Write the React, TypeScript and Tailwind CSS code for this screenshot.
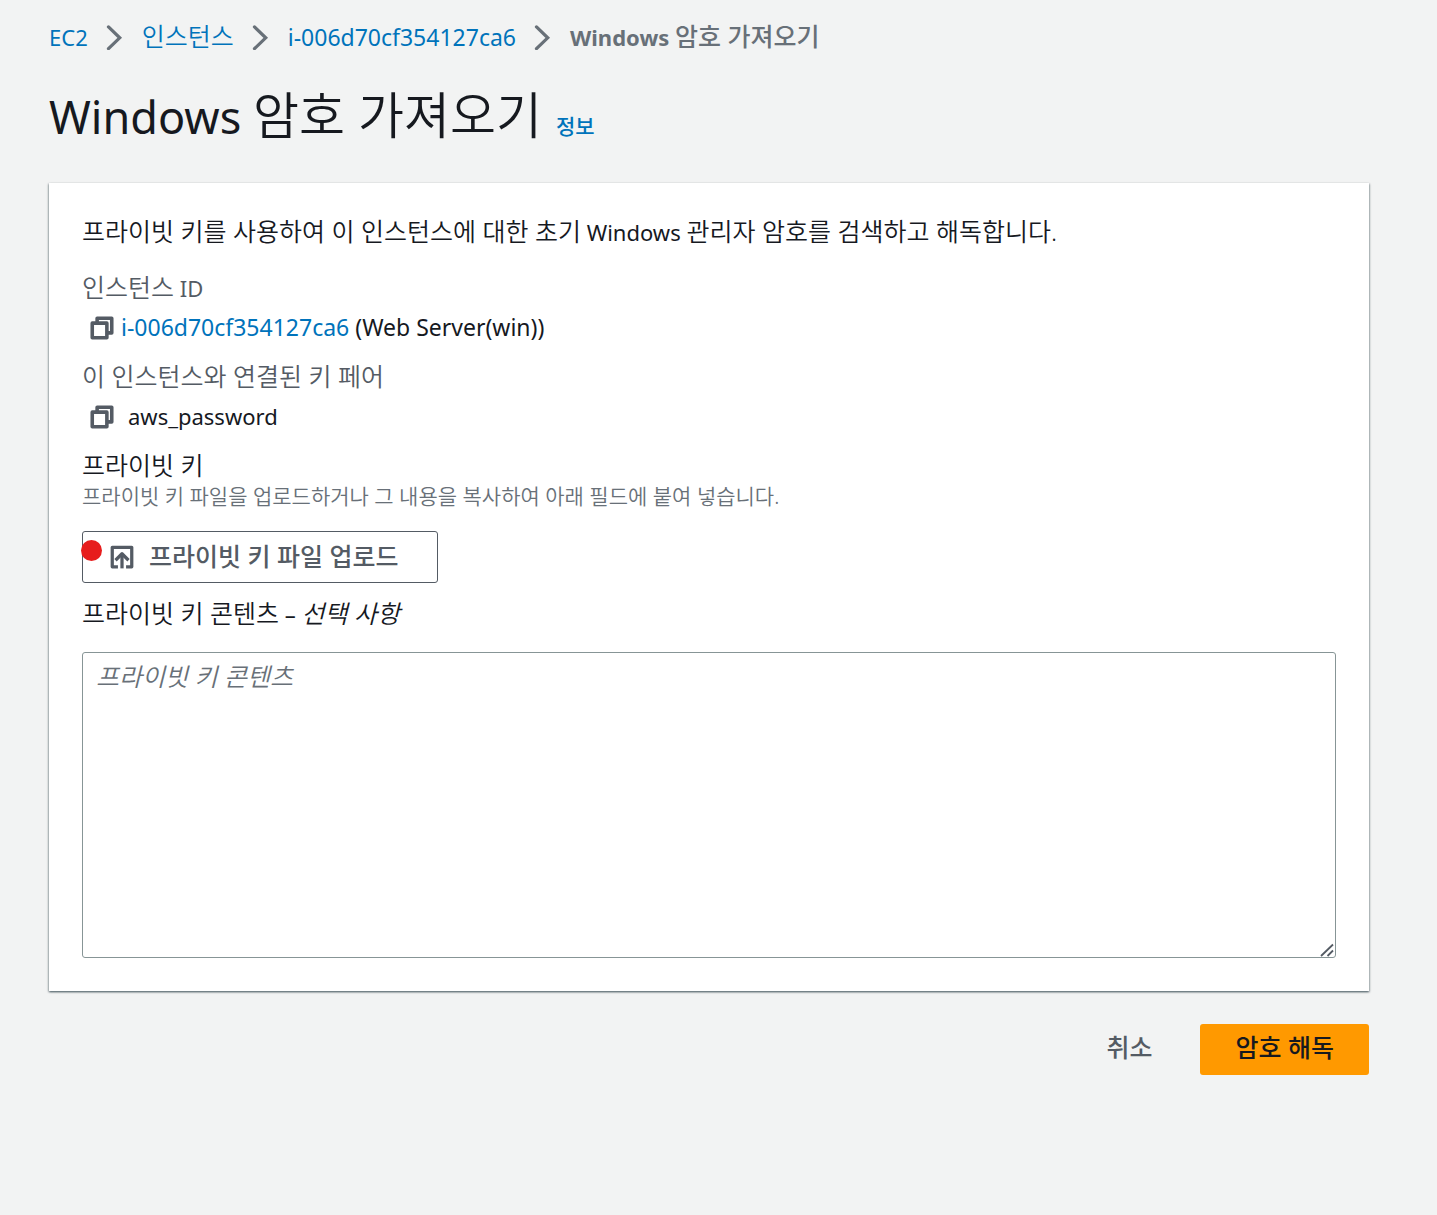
import type { ReactNode } from "react";

function Ko({ children }: { children: ReactNode }) {
  return <span className="text-[25px] font-[350]">{children}</span>;
}

function KoBold({ children }: { children: ReactNode }) {
  return <span className="text-[25px] font-medium">{children}</span>;
}

function Chevron() {
  return (
    <svg aria-hidden="true" viewBox="0 0 16 16" className="mx-[14px] size-[26px] shrink-0 text-[#687078]" fill="none" stroke="currentColor" strokeWidth="2" strokeLinecap="round">
      <path d="M4 1.8 10.9 8.500 4 15.2" />
    </svg>
  );
}

function CopyButton({ label }: { label: string }) {
  return (
    <button type="button" aria-label={label} className="ml-[7px] text-[#545b64]">
      <svg aria-hidden="true" viewBox="0 0 16 16" className="size-[26px]" fill="none" stroke="currentColor" strokeWidth="2.2">
        <path d="M2 5h9v9H2z" strokeLinejoin="round" />
        <path d="M5 5V2h9v9h-3" strokeLinejoin="round" />
      </svg>
    </button>
  );
}

function UploadIcon() {
  return (
    <svg aria-hidden="true" viewBox="0 0 16 16" className="size-[26px] shrink-0" fill="none" stroke="currentColor" strokeWidth="2" strokeLinejoin="round">
      <path d="M5.500 14H2V2h12v12h-3.500" />
      <path d="M8 15V6.500" />
      <path d="M4 10l4-4 4 4" />
    </svg>
  );
}

export default function App() {
  return (
    <div className="min-h-screen bg-[#f2f3f3] pt-5 pr-[68px] pb-10 pl-[49px] font-['Noto_Sans','Noto_Sans_CJK_KR',sans-serif] text-[22px] leading-[33px] text-[#16191f]">
      <nav aria-label="breadcrumb">
        <ol className="flex items-center whitespace-nowrap text-[#0073bb]">
          <li><a href="#ec2">EC2</a></li>
          <li className="flex items-center"><Chevron /><a href="#instances"><Ko>인스턴스</Ko></a></li>
          <li className="flex items-center"><Chevron /><a href="#instance" className="text-[23px]">i-006d70cf354127ca6</a></li>
          <li className="flex items-center font-bold text-[#687078]"><Chevron /><span aria-current="page">Windows <KoBold>암호 가져오기</KoBold></span></li>
        </ol>
      </nav>

      <header className="mt-7 flex items-baseline gap-[14px]">
        <h1 className="text-[45px] leading-[66px]">Windows <span className="text-[50px] font-[350]">암호 가져오기</span></h1>
        <a href="#info" className="text-[21px] font-medium text-[#0073bb]">정보</a>
      </header>

      <main className="mt-[33px]">
        <section className="bg-white px-[33px] pt-8 pb-[33px] shadow-[0_1px_2px_0_rgba(0,28,36,0.6),1px_1px_2px_0_rgba(0,28,36,0.15),-1px_1px_2px_0_rgba(0,28,36,0.15)]">
          <p><Ko>프라이빗 키를 사용하여 이 인스턴스에 대한 초기</Ko> Windows <Ko>관리자 암호를 검색하고 해독합니다.</Ko></p>
          <dl className="mt-[22px]">
            <dt className="text-[#545b64]"><Ko>인스턴스</Ko> ID</dt>
            <dd className="mt-[6px] flex items-center">
              <CopyButton label="인스턴스 ID 복사" />
              <span className="ml-[6px] text-[23px]"><a href="#instance" className="text-[#0073bb]">i-006d70cf354127ca6</a> (Web Server(win))</span>
            </dd>
            <dt className="mt-4 text-[#545b64]"><Ko>이 인스턴스와 연결된 키 페어</Ko></dt>
            <dd className="mt-[6px] flex items-center">
              <CopyButton label="키 페어 복사" />
              <span className="ml-[13px]">aws_password</span>
            </dd>
          </dl>
          <h2 className="mt-4"><Ko>프라이빗 키</Ko></h2>
          <p className="text-[21px] leading-[26px] font-[350] text-[#687078]">프라이빗 키 파일을 업로드하거나 그 내용을 복사하여 아래 필드에 붙여 넣습니다.</p>
          <div className="relative mt-[22px] w-fit">
            <button type="button" className="flex items-center gap-[14px] rounded-[3px] border border-[#545b64] pt-2 pr-[38px] pb-[9px] pl-[26px] text-[#545b64]">
              <UploadIcon />
              <KoBold>프라이빗 키 파일 업로드</KoBold>
            </button>
            <span aria-hidden="true" className="absolute top-[9px] left-[-1px] size-[21px] rounded-full bg-[#e71d1d]" />
          </div>
          <label htmlFor="key-content" className="mt-[14px] block"><Ko>프라이빗 키 콘텐츠</Ko> – <em><Ko>선택 사항</Ko></em></label>
          <div className="relative mt-[21px]">
            <textarea id="key-content" placeholder="프라이빗 키 콘텐츠" className="block h-[306px] w-full resize-none rounded-[3px] border border-[#879596] bg-white px-[13px] py-[7px] text-[25px] font-[350] placeholder:text-[#687078] placeholder:italic" />
            <svg aria-hidden="true" viewBox="0 0 14 14" className="pointer-events-none absolute right-[2px] bottom-px size-[14px]" fill="none" stroke="#545b64" strokeWidth="1.800">
              <path d="M1 13 13 1.500M7.500 13 13 7.500" />
            </svg>
          </div>
        </section>
        <div className="mt-[33px] flex justify-end gap-[13px]">
          <button type="button" className="px-[35px] pt-[7px] pb-[10px] text-[#545b64]"><KoBold>취소</KoBold></button>
          <button type="button" className="rounded-[3px] bg-[#ff9900] px-[35px] pt-[7px] pb-[10px]"><KoBold>암호 해독</KoBold></button>
        </div>
      </main>
    </div>
  );
}
